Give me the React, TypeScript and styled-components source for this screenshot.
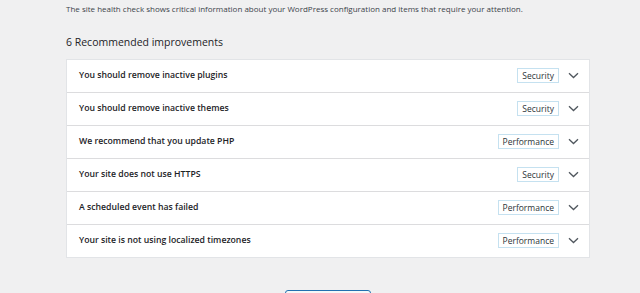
import React from "react";
import styled, { createGlobalStyle } from "styled-components";

const Global = createGlobalStyle`
  html, body { margin: 0; padding: 0; background: #f0f0f1; }
  body { font-family: "Open Sans", "Noto Sans", sans-serif; color: #1d2327; overflow: hidden; }
`;

const Page = styled.div`
  width: 640px;
  height: 293px;
  padding: 0 50px 0 66px;
  box-sizing: border-box;
  display: flex;
  flex-direction: column;
`;

const Description = styled.p`
  margin: 0;
  font-size: 8px;
  line-height: 17px;
  color: #3c434a;
`;

const Heading = styled.h2`
  margin: 17px 0 0;
  font-size: 10.5px;
  font-weight: 400;
  line-height: 17px;
  color: #1d2327;
`;

const Panel = styled.div`
  margin-top: 8px;
  width: 524px;
  background: #fff;
  border: 1px solid #e2e4e7;
  box-sizing: border-box;
`;

const Row = styled.div`
  height: 33px;
  box-sizing: border-box;
  display: flex;
  align-items: center;
  padding: 0 10px 2px 12px;
  border-top: 1px solid #dcdcde;
  &:first-child { border-top: none; height: 32px; }
`;

const Title = styled.span`
  flex: 1;
  font-size: 8.7px;
  font-weight: 600;
  color: #1d2327;
`;

const Badge = styled.span`
  display: inline-flex;
  align-items: center;
  height: 15px;
  padding: 0 4px;
  border: 1px solid #c5e1f0;
  box-sizing: border-box;
  font-size: 8.5px;
  color: #2c3338;
`;

const Chevron = styled.svg`
  margin-left: 9px;
  width: 11px;
  height: 7px;
`;

const ButtonRow = styled.div`
  display: flex;
  justify-content: flex-start;
  padding-left: 219px;
  margin-top: 32px;
`;

const Button = styled.button`
  width: 86px;
  height: 28px;
  border: 1px solid #2271b1;
  border-radius: 3px;
  background: #f6f7f7;
  padding: 0;
`;

const items: [string, string][] = [
  ["You should remove inactive plugins", "Security"],
  ["You should remove inactive themes", "Security"],
  ["We recommend that you update PHP", "Performance"],
  ["Your site does not use HTTPS", "Security"],
  ["A scheduled event has failed", "Performance"],
  ["Your site is not using localized timezones", "Performance"],
];

export default function App() {
  return (
    <>
      <Global />
      <Page>
        <Description>
          The site health check shows critical information about your WordPress configuration and items that require your attention.
        </Description>
        <Heading>6 Recommended improvements</Heading>
        <Panel>
          {items.map(([t, b]) => (
            <Row key={t}>
              <Title>{t}</Title>
              <Badge>{b}</Badge>
              <Chevron viewBox="0 0 11 7">
                <path d="M1 1.2 L5.5 5.5 L10 1.2" fill="none" stroke="#50575e" strokeWidth="1.3" />
              </Chevron>
            </Row>
          ))}
        </Panel>
        <ButtonRow>
          <Button aria-label="Passed tests" />
        </ButtonRow>
      </Page>
    </>
  );
}
